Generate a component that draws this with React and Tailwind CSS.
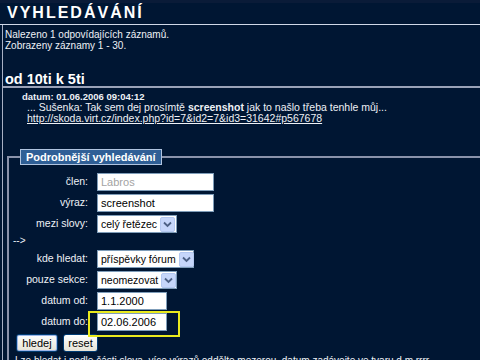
import React from "react";

function Chevron() {
  return (
    <span className="flex h-[15px] w-[15px] shrink-0 items-center justify-center rounded-[2px] border border-[#b4c8f0] bg-[#c6d6fa]">
      <svg width="9" height="7" viewBox="0 0 9 7">
        <path d="M1 1.5 L4.5 5 L8 1.5" fill="none" stroke="#4d6185" strokeWidth="1.8" />
      </svg>
    </span>
  );
}

function Select({ value, width }) {
  return (
    <div
      className={`flex h-[18px] items-center justify-between gap-[3px] whitespace-nowrap border border-[#7f9db9] bg-white pl-[3px] pr-px text-[10.5px] leading-[16px] text-black ${width}`}
    >
      <span>{value}</span>
      <Chevron />
    </div>
  );
}

function Input({ value, width, muted }) {
  return (
    <div
      className={`h-[18px] whitespace-nowrap border border-[#7f9db9] bg-white px-[3px] text-[11px] leading-[16px] ${muted ? "text-[#a3a3a3]" : "text-black"} ${width}`}
    >
      {value}
    </div>
  );
}

function Row({ label, children }) {
  return (
    <div className="grid h-[21px] grid-cols-[79px_1fr] gap-x-[9px]">
      <div className="whitespace-nowrap text-right text-[10.5px] leading-[16px]">{label}</div>
      <div>{children}</div>
    </div>
  );
}

export default function App() {
  return (
    <div className="h-[360px] w-[480px] overflow-hidden bg-[#001633] font-['Liberation_Sans',Arial,sans-serif] text-[10px] leading-[11px] text-[#eef1f6]">
      {/* header */}
      <div className="h-[24px] border-t-[3px] border-[#0a1b38] pl-[7px]">
        <h1 className="text-[16px] font-bold leading-[19px] tracking-[2px] text-white">VYHLEDÁVÁNÍ</h1>
      </div>
      <div className="h-px bg-[#d0d8e8]" />

      <div className="ml-[2px] h-[335px] border-l border-[#a8b0c4]">
        <div className="pl-[2px] pt-[4px]">
          <p>Nalezeno 1 odpovídajících záznamů.</p>
          <p>Zobrazeny záznamy 1 - 30.</p>
        </div>

        <h2 className="mt-[22px] pl-[2px] text-[14.5px] font-bold leading-[13px] text-white">od 10ti k 5ti</h2>
        <div className="h-[2px] bg-[#9aa2b8]" />

        <div className="mt-[3px]">
          <p className="pl-[19px] text-[9.5px] font-bold">datum: 01.06.2006 09:04:12</p>
          <p className="whitespace-nowrap pl-[24px] text-[10.5px]">
            ... Sušenka: Tak sem dej prosímtě <b>screenshot</b> jak to našlo třeba tenhle můj...
          </p>
          <p className="whitespace-nowrap pl-[24px] text-[10.5px]">
            <a className="underline" href="#">
              http://skoda.virt.cz/index.php?id=7&amp;id2=7&amp;id3=31642#p567678
            </a>
          </p>
        </div>

        <fieldset className="ml-[4px] mt-[25px] w-[600px] border-2 border-[#8a92aa] pb-[10px]">
          <legend className="ml-[11px] border border-[#b0c4e0] bg-[#2f5f96] px-[5px] text-[11px] font-bold leading-[14px] text-white">
            Podrobnější vyhledávání
          </legend>

          <div className="pt-[8px]">
            <Row label="člen:">
              <Input value="Labros" width="w-[117px]" muted />
            </Row>
            <Row label="výraz:">
              <Input value="screenshot" width="w-[117px]" />
            </Row>
            <Row label="mezi slovy:">
              <Select value="celý řetězec" width="w-[80px]" />
            </Row>
            <div className="h-[14px] pl-[4px] leading-[10px]">--&gt;</div>
            <Row label="kde hledat:">
              <Select value="příspěvky fórum" width="w-[97px]" />
            </Row>
            <Row label="pouze sekce:">
              <Select value="neomezovat" width="w-[80px]" />
            </Row>
            <Row label="datum od:">
              <Input value="1.1.2000" width="w-[70px]" />
            </Row>
            <Row label="datum do:">
              <div className="relative w-[70px]">
                <Input value="02.06.2006" width="w-[70px]" />
                <span className="absolute left-[-9px] top-[-2px] h-[26px] w-[92px] border-2 border-[#eaea1e]" />
              </div>
            </Row>

            <div className="flex gap-[5px] pl-[7px]">
              <button className="h-[18px] w-[42px] rounded-[3px] border border-[#003c74] bg-gradient-to-b from-white to-[#e6e3d6] text-[11px] leading-[14px] text-black shadow-[inset_0_0_0_1px_#9db6e8]">
                hledej
              </button>
              <button className="h-[18px] w-[35px] rounded-[3px] border border-[#003c74] bg-gradient-to-b from-white to-[#e6e3d6] text-[11px] leading-[14px] text-black">
                reset
              </button>
            </div>
            <p className="mt-[3px] whitespace-nowrap pl-[6px]">
              Lze hledat i podle části slova, více výrazů oddělte mezerou, datum zadávejte ve tvaru d.m.rrrr ...
            </p>
          </div>
        </fieldset>
      </div>
    </div>
  );
}
